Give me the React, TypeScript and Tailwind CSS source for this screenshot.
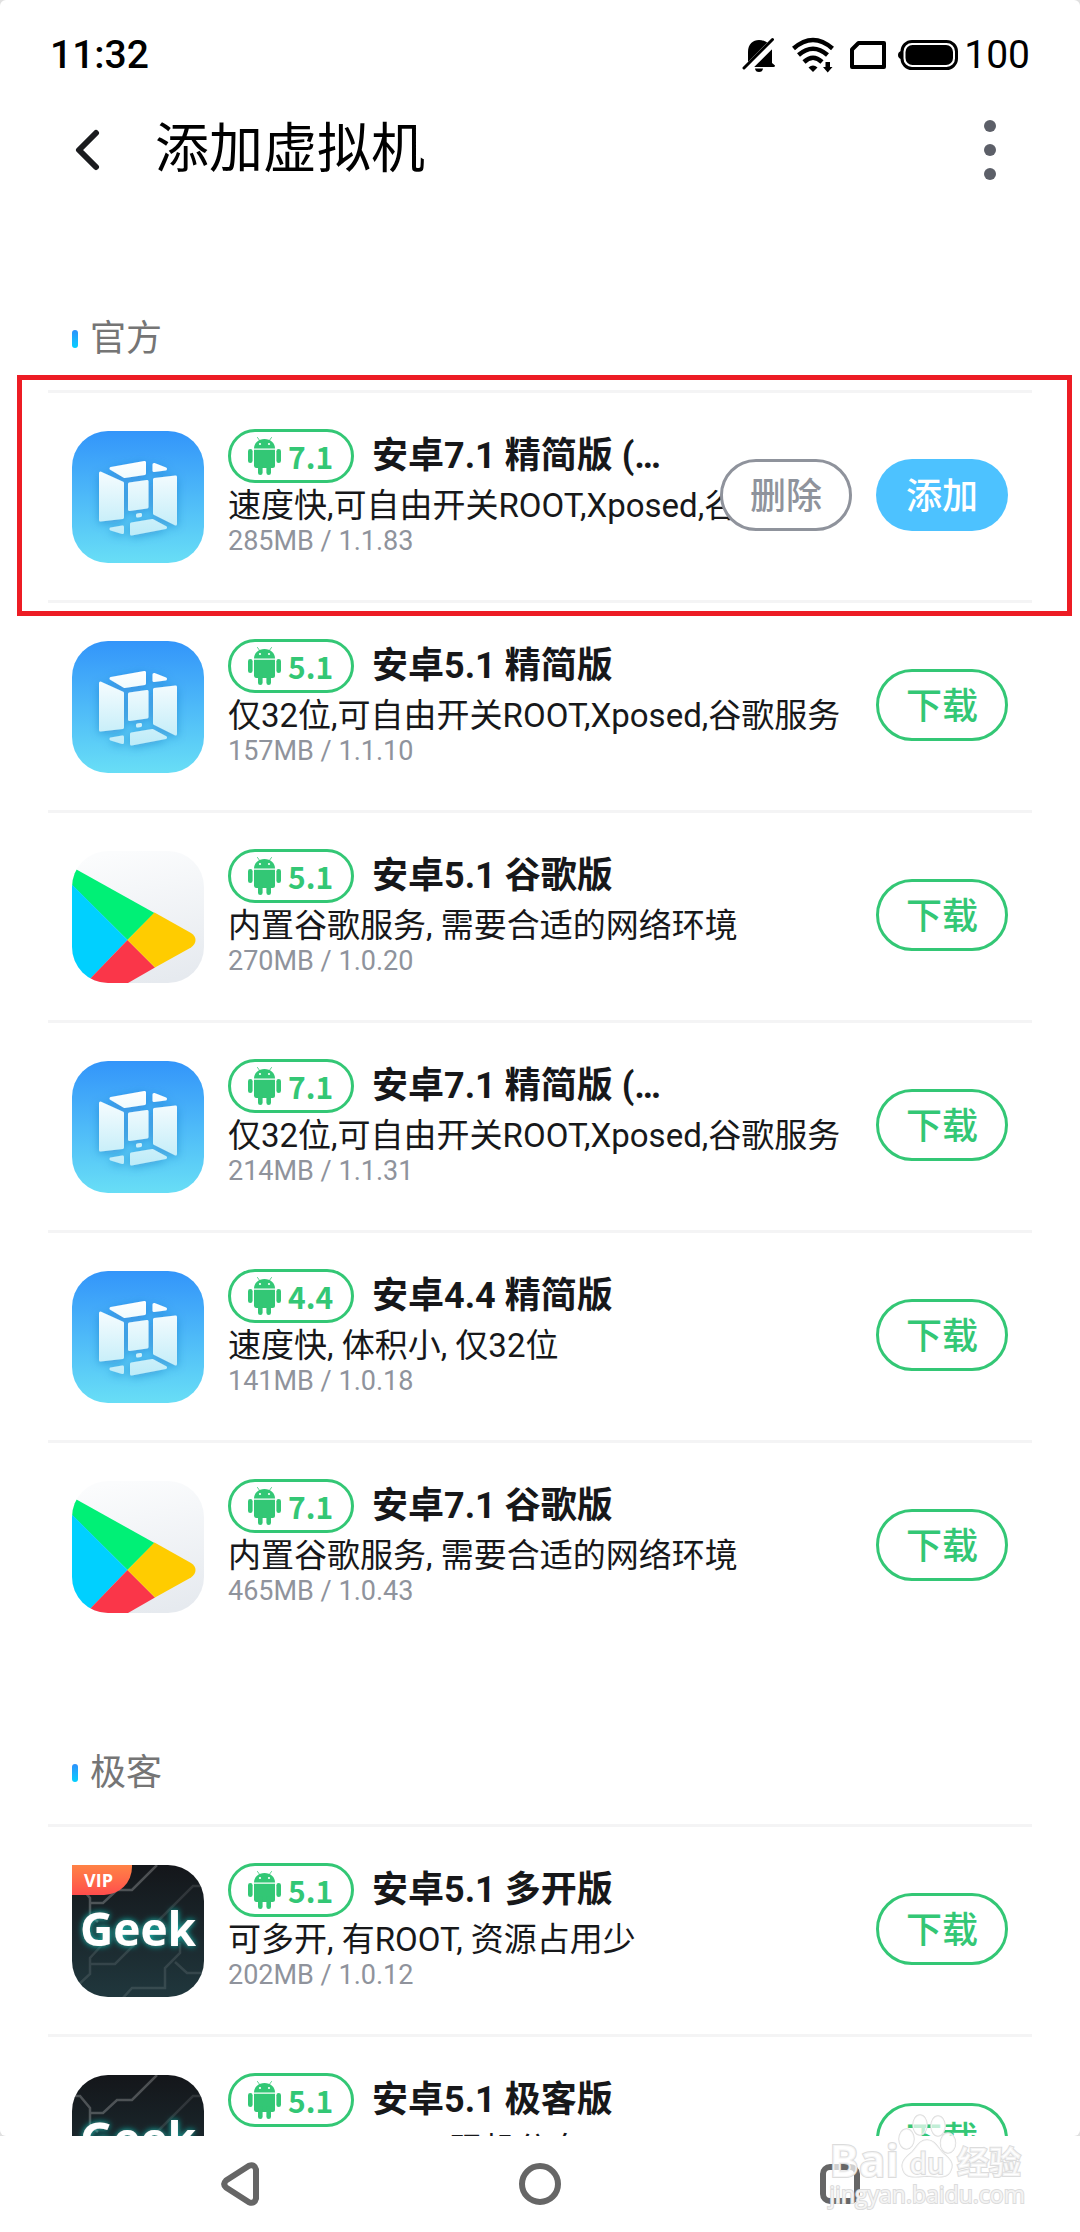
import { useId } from "react";

type Kind = "vmos" | "play" | "geek" | "geekVip";

interface Rom {
  id: string;
  kind: Kind;
  version: string;
  title: string;
  desc: string;
  meta: string;
  installed?: boolean;
}

const official: Rom[] = [
  { id: "o1", kind: "vmos", version: "7.1", title: "安卓7.1 精简版 (…", desc: "速度快,可自由开关ROOT,Xposed,谷歌服务", meta: "285MB / 1.1.83", installed: true },
  { id: "o2", kind: "vmos", version: "5.1", title: "安卓5.1 精简版", desc: "仅32位,可自由开关ROOT,Xposed,谷歌服务", meta: "157MB / 1.1.10" },
  { id: "o3", kind: "play", version: "5.1", title: "安卓5.1 谷歌版", desc: "内置谷歌服务, 需要合适的网络环境", meta: "270MB / 1.0.20" },
  { id: "o4", kind: "vmos", version: "7.1", title: "安卓7.1 精简版 (…", desc: "仅32位,可自由开关ROOT,Xposed,谷歌服务", meta: "214MB / 1.1.31" },
  { id: "o5", kind: "vmos", version: "4.4", title: "安卓4.4 精简版", desc: "速度快, 体积小, 仅32位", meta: "141MB / 1.0.18" },
  { id: "o6", kind: "play", version: "7.1", title: "安卓7.1 谷歌版", desc: "内置谷歌服务, 需要合适的网络环境", meta: "465MB / 1.0.43" },
];

const geek: Rom[] = [
  { id: "g1", kind: "geekVip", version: "5.1", title: "安卓5.1 多开版", desc: "可多开, 有ROOT, 资源占用少", meta: "202MB / 1.0.12" },
  { id: "g2", kind: "geek", version: "5.1", title: "安卓5.1 极客版", desc: "ROOT, Xposed, 现机分身", meta: "210MB / 1.0.10" },
];

function VmosLogo() {
  const id = useId();
  return (
    <svg viewBox="0 0 132 132" className="block size-full" aria-hidden="true">
      <defs>
        <linearGradient id={id + "b"} x1="0" y1="0" x2="0" y2="1">
          <stop offset="0" stopColor="#3395fa" />
          <stop offset="1" stopColor="#68def6" />
        </linearGradient>
        <linearGradient id={id + "p"} gradientUnits="userSpaceOnUse" x1="0" y1="30" x2="0" y2="105">
          <stop offset="0" stopColor="#ffffff" />
          <stop offset="1" stopColor="#bcebf8" />
        </linearGradient>
        <filter id={id + "s"} x="-30%" y="-30%" width="160%" height="160%">
          <feDropShadow dx="0" dy="2" stdDeviation="5" floodColor="#1668b8" floodOpacity="0.45" />
        </filter>
      </defs>
      <rect width="132" height="132" fill={`url(#${id}b)`} />
      <g fill={`url(#${id}p)`} stroke={`url(#${id}p)`} strokeWidth="3" strokeLinejoin="round" filter={`url(#${id}s)`}>
        <path d="M39 37.5 72.500 31.500V42.500L52.500 45.500Z" />
        <path d="M82 33.500 93.500 38 82 39.500Z" />
        <path d="M28.500 42 50.500 52V86.500L28.500 89Z" />
        <path d="M57.500 53 75 50.500V76L57.500 78.500Z" />
        <path d="M82.500 48.500 103.500 46V93L82.500 82.500Z" />
        <path d="M65.500 84 68.500 83.600V84.500L65.500 85Z" />
        <path d="M39 98 50.500 96V101.500Z" />
        <path d="M59.500 93 80.500 89.500 93.500 96.500 59.500 103Z" />
      </g>
    </svg>
  );
}

function PlayLogo() {
  const id = useId();
  return (
    <svg viewBox="0 0 132 132" className="block size-full" aria-hidden="true">
      <defs>
        <linearGradient id={id} x1="0.400" y1="0" x2="0.600" y2="1">
          <stop offset="0" stopColor="#fbfcfd" />
          <stop offset="1" stopColor="#e6eaef" />
        </linearGradient>
      </defs>
      <rect width="132" height="132" fill={`url(#${id})`} />
      <path d="M0 16 82.500 62 55.500 89 0 34Z" fill="#00f076" />
      <path d="M0 33.500 55.500 89 18 128 0 132Z" fill="#00d0ff" />
      <path d="M55.500 89 83 116.500 56 132H14Z" fill="#fa3649" />
      <path d="M82.500 61.500 119 82Q123.500 85 123.500 89T119 96.500L83 116.500 55.500 89Z" fill="#ffcc00" />
    </svg>
  );
}

function GeekLogo() {
  const id = useId();
  return (
    <svg viewBox="0 0 132 132" className="block size-full" aria-hidden="true">
      <defs>
        <linearGradient id={id + "b"} x1="0" y1="0" x2="0" y2="1">
          <stop offset="0" stopColor="#14161a" />
          <stop offset="1" stopColor="#20373d" />
        </linearGradient>
        <filter id={id + "g"} x="-20%" y="-40%" width="140%" height="180%">
          <feDropShadow dx="0" dy="0" stdDeviation="3" floodColor="#16c9bd" floodOpacity="1" />
        </filter>
      </defs>
      <rect width="132" height="132" fill={`url(#${id}b)`} />
      <g fill="none" stroke="#ffffff" strokeWidth="2.500">
        <path strokeOpacity="0.240" d="M85 0 60 25H45L31 38H18M0 21H8L18 33V50L26 57" />
        <path strokeOpacity="0.110" d="M132 21H121L85 57M30 80 18 93V109L4 122M18 99H43L63 79M50 134 60 123H93V103L108 88V78M103 97 115 108H132" />
      </g>
      <text x="66" y="81" textAnchor="middle" fill="#ffffff" fontFamily="'Open Sans', sans-serif" fontWeight="700" fontSize="46" filter={`url(#${id}g)`}>
        Geek
      </text>
    </svg>
  );
}

function RomLogo({ kind }: { kind: Kind }) {
  return (
    <div className={"relative mt-0.5 size-[132px] shrink-0 overflow-hidden rounded-[36px] " + (kind === "geekVip" ? "rounded-tl-none" : "")}>
      {kind === "vmos" ? <VmosLogo /> : kind === "play" ? <PlayLogo /> : <GeekLogo />}
      {kind === "geekVip" && (
        <span className="absolute top-0 left-0 flex h-[30px] w-[60px] items-center rounded-br-[28px] bg-linear-to-b from-[#ff8245] to-[#ff4c4c] pl-3 font-['Open_Sans',sans-serif] text-lg leading-none font-bold text-white">
          VIP
        </span>
      )}
    </div>
  );
}

function AndroidIcon() {
  return (
    <svg viewBox="0 0 33 38" className="h-[38px] w-[33px] shrink-0" fill="#33c775" aria-hidden="true">
      <path d="M6 11.500C6 6 10.500 2 16.500 2S27 6 27 11.500Z" />
      <path d="M9.500.500 12 4M23.500.500 21 4" stroke="#33c775" strokeWidth="0.800" strokeLinecap="round" />
      <circle cx="12" cy="7" r="1.100" fill="#fff" />
      <circle cx="21" cy="7" r="1.100" fill="#fff" />
      <path d="M6 12.800H27V28.500Q27 31 24.500 31H8.500Q6 31 6 28.500Z" />
      <rect x="0" y="12" width="4.600" height="14" rx="2.300" />
      <rect x="28.400" y="12" width="4.600" height="14" rx="2.300" />
      <rect x="10" y="25" width="4.600" height="13" rx="2.300" />
      <rect x="18.400" y="25" width="4.600" height="13" rx="2.300" />
    </svg>
  );
}

const pill = "flex h-[72px] w-[132px] items-center justify-center rounded-full pt-1 text-4xl leading-none font-medium";

function RomRow({ rom }: { rom: Rom }) {
  return (
    <li className="relative flex items-start border-t-3 border-[#f4f4f5] px-6 pt-9 pb-[37px]">
      <RomLogo kind={rom.kind} />
      <div className="ml-6 min-w-0 flex-1 whitespace-nowrap">
        <div className="flex h-[54px] items-center">
          <span className="flex h-[54px] w-[126px] shrink-0 items-center gap-[7px] rounded-full border-3 border-[#33c775] pl-[17px] font-['Noto_Sans_CJK_SC',sans-serif] text-[30px] leading-none font-bold text-[#33c775]">
            <AndroidIcon />
            {rom.version}
          </span>
          <h3 className="ml-[18px] text-4xl leading-none font-bold">{rom.title}</h3>
        </div>
        <p className="mt-[5px] text-[33px] leading-9">{rom.desc}</p>
        <p className="mt-px text-[27px] leading-8 text-[#8f939c]">{rom.meta}</p>
      </div>
      <div className="relative mt-[30px] shrink-0">
        {rom.installed ? (
          <>
            <button type="button" className={pill + " absolute top-0 right-full mr-6 border-3 border-[#8f939c] bg-white text-[#8f939c]"}>
              删除
            </button>
            <button type="button" className={pill + " bg-[#4dc2ff] text-white"}>
              添加
            </button>
          </>
        ) : (
          <button type="button" className={pill + " border-3 border-[#33c775] text-[#33c775]"}>
            下载
          </button>
        )}
      </div>
      {rom.installed && <div className="pointer-events-none absolute -top-[18px] -right-10 -bottom-4 -left-[31px] z-10 border-5 border-[#ed1c24]" />}
    </li>
  );
}

function RomSection({ title, roms }: { title: string; roms: Rom[] }) {
  return (
    <section className="px-12 pt-[95px]">
      <h2 className="flex h-[79px] items-center gap-3 pb-6 pl-6 text-4xl leading-none text-[#757575]">
        <span className="h-[18px] w-1.5 rounded-full bg-linear-to-b from-[#2b90fb] to-[#00d0ff]" />
        {title}
      </h2>
      <ul>
        {roms.map((rom) => (
          <RomRow key={rom.id} rom={rom} />
        ))}
      </ul>
    </section>
  );
}

function StatusBar() {
  return (
    <div className="flex h-[108px] shrink-0 items-center justify-between pt-0.5 pr-[50px] pl-[50px] text-[39px] leading-none font-medium text-black">
      <span>11:32</span>
      <div className="flex items-center">
        <svg viewBox="0 0 34 36" className="h-9 w-[34px]" aria-label="静音">
          <path d="M6 27V15C6 7 11 3 17 3S29 7 30 13V26L33 28.500Q33 30 31.500 30H6Z" />
          <path d="M13 31.500H21Q20.500 35 17 35T13 31.500Z" />
          <path d="M3 33.500 33 3.500" stroke="#fff" strokeWidth="8" />
          <path d="M2 31 30.500 2.500" stroke="#000" strokeWidth="3" strokeLinecap="round" />
        </svg>
        <svg viewBox="0 0 42 36" className="ml-4 h-9 w-[42px]" aria-label="无线网络">
          <g fill="none" stroke="#000" strokeWidth="4.500">
            <path d="M1.500 11.500Q21-5.500 40.500 11.500" />
            <path d="M6.500 18Q21 5.500 35.500 18" />
            <path d="M12 25Q21 16.500 30 25" />
          </g>
          <path d="M21 35 16.500 30.500Q21 26.500 25.500 30.500Z" />
          <path d="M33.500 25H38V30H40.500L35.700 35.500 31 30H33.500Z" />
        </svg>
        <svg viewBox="0 0 36 28" className="ml-4 h-7 w-9" aria-label="SIM 卡" fill="none" stroke="#000" strokeWidth="4" strokeLinejoin="round">
          <path d="M2 8.500 8.500 2H34V26H2Z" />
        </svg>
        <svg viewBox="0 0 60 30" className="ml-3 h-[30px] w-[60px]" aria-label="电池">
          <rect x="4" y="1.500" width="54.500" height="27" rx="10" fill="none" stroke="#000" strokeWidth="3" />
          <rect x="7.500" y="5" width="47.500" height="20" rx="7" />
          <path d="M3 11Q0 12 0 15T3 19Z" />
        </svg>
        <span className="ml-[6px] font-normal">100</span>
      </div>
    </div>
  );
}

function NavBar() {
  return (
    <nav className="grid h-24 shrink-0 grid-cols-3 px-[90px]" aria-label="系统导航">
      <button type="button" aria-label="返回" className="flex items-center justify-center">
        <svg viewBox="0 0 42 44" className="h-11 w-[42px]" fill="none" stroke="#666" strokeWidth="6" strokeLinejoin="round">
          <path d="M7 18.500 30 3.800Q35.500 1.500 37 7.500V36.500Q35.500 42.500 30 40.200L7 25.500Q3.500 22 7 18.500Z" />
        </svg>
      </button>
      <button type="button" aria-label="主屏幕" className="flex items-center justify-center">
        <span className="size-[42px] rounded-full border-6 border-[#666]" />
      </button>
      <button type="button" aria-label="最近任务" className="flex items-center justify-center">
        <span className="size-10 rounded-[10px] border-6 border-[#666]" />
      </button>
    </nav>
  );
}

function Watermark() {
  return (
    <div className="pointer-events-none absolute right-[55px] bottom-[23px] z-20 font-['Noto_Sans_CJK_SC',sans-serif] font-bold text-white/70 [paint-order:stroke_fill] [-webkit-text-stroke:2px_#dcdcdc]">
      <div className="flex h-[66px] items-end">
        <span className="font-['Open_Sans',sans-serif] text-[44px] leading-10">Bai</span>
        <div className="relative -ml-0.5 h-[66px] w-[60px]">
          <svg viewBox="0 0 60 66" className="size-full" fill="#fff" fillOpacity="0.700" stroke="#dcdcdc" strokeWidth="1.500" aria-hidden="true">
            <ellipse cx="9.500" cy="25" rx="7.500" ry="10" />
            <ellipse cx="23" cy="11" rx="7" ry="10" />
            <ellipse cx="41" cy="12" rx="7" ry="10" />
            <ellipse cx="51" cy="29" rx="7.500" ry="10" />
            <path d="M30 26C38 26 41 34 46 39 53 45 57 49 54 56 51 65 41 63 30 62 19 63 9 65 6 56 3 48 9 43 15 38 20 33 22 26 30 26Z" />
          </svg>
          <span className="absolute inset-x-0 bottom-1 text-center text-[28px] leading-7 font-medium">du</span>
        </div>
        <span className="text-[32px] leading-10">经验</span>
      </div>
      <div className="h-[29px] font-['Open_Sans',sans-serif] text-[23px] leading-7 font-normal">jingyan.baidu.com</div>
    </div>
  );
}

export default function App() {
  return (
    <div className="relative flex h-screen flex-col bg-white font-[Roboto,'Noto_Sans_CJK_SC',sans-serif] text-[#17181a]" lang="zh-CN">
      <div className="flex min-h-0 flex-1 flex-col bg-[#e0e0e0]">
        <div className="flex min-h-0 flex-1 flex-col overflow-hidden rounded-md bg-white">
          <StatusBar />
          <header className="flex h-[84px] shrink-0 items-center pr-[72px] pl-[72px]">
            <button type="button" aria-label="返回" className="flex h-full w-8 items-center">
              <svg viewBox="0 0 32 42" className="h-[42px] w-8" fill="none" stroke="#1b1c1f" strokeWidth="6" strokeLinecap="round" strokeLinejoin="round">
                <path d="M24 4 7 21 24 38" />
              </svg>
            </button>
            <h1 className="ml-[51px] flex-1 text-[54px] leading-none font-normal text-black">添加虚拟机</h1>
            <button type="button" aria-label="更多" className="flex h-full w-9 flex-col items-center justify-center gap-3">
              <span className="size-3 rounded-full bg-[#5c5f68]" />
              <span className="size-3 rounded-full bg-[#5c5f68]" />
              <span className="size-3 rounded-full bg-[#5c5f68]" />
            </button>
          </header>
          <main className="min-h-0 flex-1 overflow-hidden pt-6">
            <RomSection title="官方" roms={official} />
            <RomSection title="极客" roms={geek} />
          </main>
        </div>
      </div>
      <NavBar />
      <Watermark />
    </div>
  );
}
